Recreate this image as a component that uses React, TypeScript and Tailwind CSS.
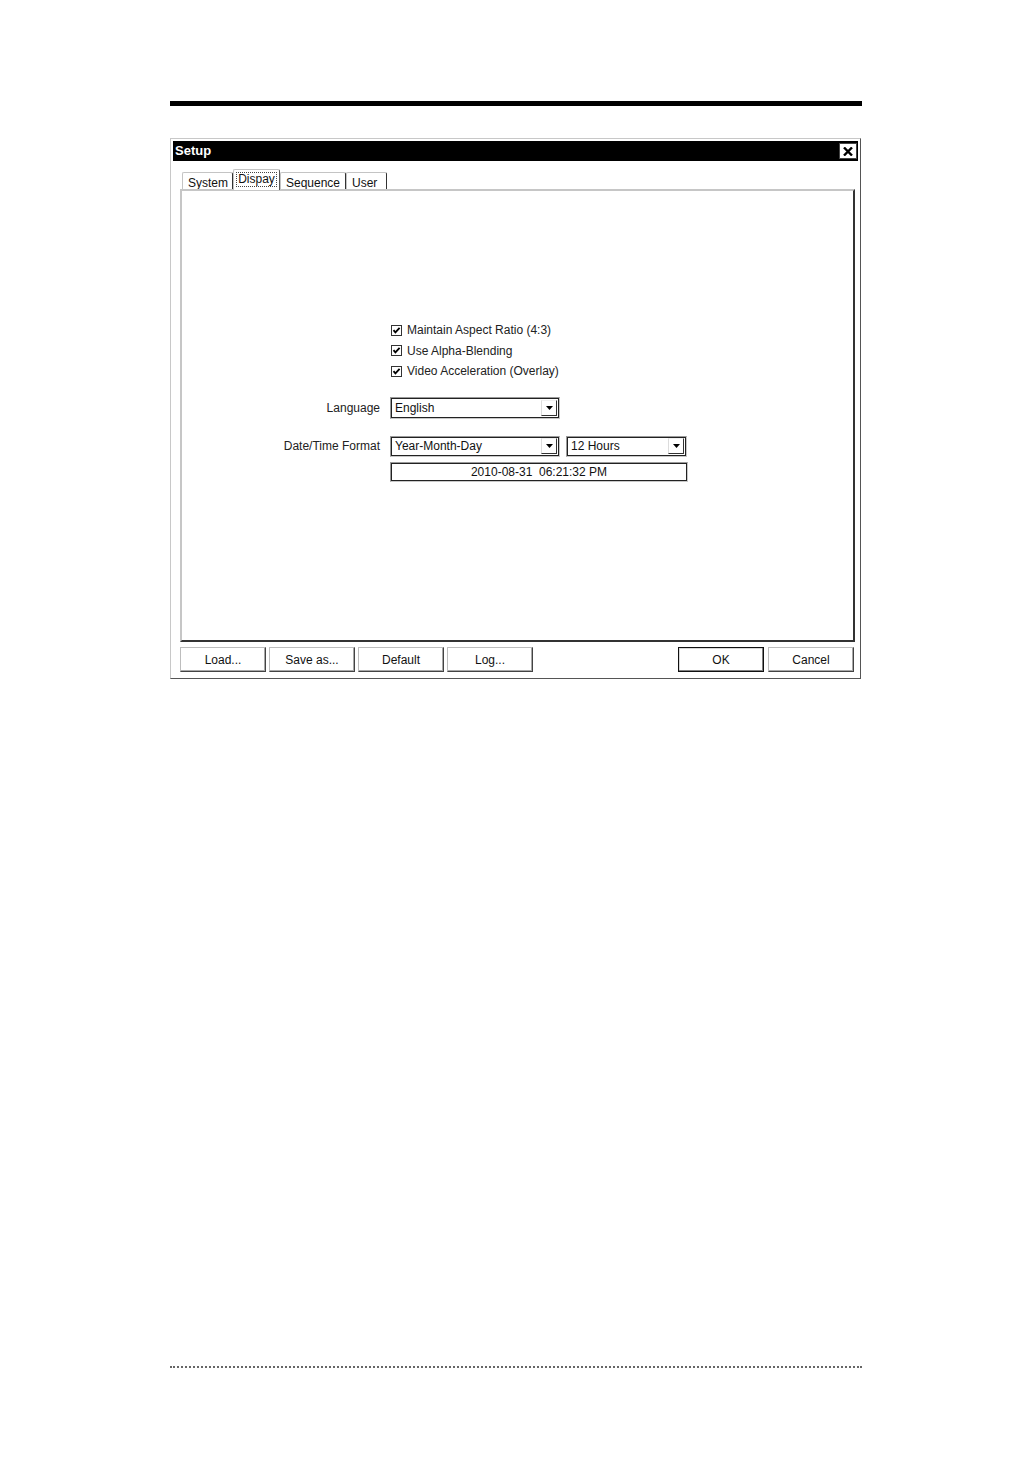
import React from "react";

const font = "font-['Liberation_Sans','Arial',sans-serif]";

function CheckBox({ label }: { label: string }) {
  return (
    <div className="flex h-[20.5px] items-center gap-[5px] pl-[1px]">
      <svg width="11" height="11" viewBox="0 0 11 11" className="shrink-0">
        <rect x="0.5" y="0.5" width="10" height="10" fill="#fff" stroke="#333" />
        <path d="M2.5 5.2 L4.4 7.4 L8.6 2.8" fill="none" stroke="#000" strokeWidth="1.8" />
      </svg>
      <span className="text-[12px] text-[#222]">{label}</span>
    </div>
  );
}

function DropArrow() {
  return (
    <div className="flex h-[16px] w-[16px] items-center justify-center border border-t-[#f0f0f0] border-l-[#dcdcdc] border-r-[#333] border-b-[#333] bg-white">
      <svg width="7" height="4" viewBox="0 0 7 4">
        <path d="M0 0 H7 L3.5 4 Z" fill="#000" />
      </svg>
    </div>
  );
}

function Select({ value, w, h }: { value: string; w: string; h: string }) {
  return (
    <div className={`${w} ${h} border border-t-[#9a9a9a] border-l-[#9a9a9a] border-r-[#c8c8c8] border-b-[#c8c8c8]`}>
      <div className="flex h-full items-center justify-between border border-[#222] bg-white pl-[3px] pr-[1px]">
        <span className="text-[12px] text-[#111]">{value}</span>
        <DropArrow />
      </div>
    </div>
  );
}

function Tab({ label, active, w }: { label: string; active?: boolean; w: string }) {
  if (active) {
    return (
      <div className={`relative z-10 -mb-[1px] flex h-[21px] shrink-0 items-start justify-center rounded-t-[2px] border border-b-0 border-t-[#c4c4c4] border-l-[#c4c4c4] border-r-[#555] bg-white pt-[2px] ${w}`}>
        <span className="border border-dotted border-[#444] px-[1px] text-[12px] leading-[13px] text-[#111]">{label}</span>
      </div>
    );
  }
  return (
    <div className={`flex h-[17px] shrink-0 items-center rounded-t-[2px] border border-b-0 border-t-[#c4c4c4] border-l-[#c4c4c4] border-r-[#333] bg-white pl-[5px] pt-[3px] ${w}`}>
      <span className="text-[12px] text-[#111]">{label}</span>
    </div>
  );
}

function Button({ label, primary }: { label: string; primary?: boolean }) {
  return (
    <div
      className={`flex h-[25px] w-[86px] items-center justify-center border bg-white ${
        primary
          ? "border-[#111] shadow-[inset_-1px_-1px_0_#808080,inset_1px_1px_0_#d8d8d8]"
          : "border-t-[#bdbdbd] border-l-[#bdbdbd] border-r-[#444] border-b-[#444] shadow-[inset_-1px_-1px_0_#a8a8a8]"
      }`}
    >
      <span className="text-[12px] text-[#111]">{label}</span>
    </div>
  );
}

export default function App() {
  return (
    <div className={`min-h-[1458px] w-[1032px] bg-white ${font}`}>
      <div className="mx-auto flex w-[692px] flex-col pt-[101px]">
        <div className="h-[5px] bg-black" />

        <div className="mt-[32px] flex h-[541px] w-[691px] flex-col border border-t-[#c8c8c8] border-l-[#c8c8c8] border-r-[#555] border-b-[#555] p-[2px]">
          <div className="flex h-[20px] items-center justify-between bg-black pl-[2px] pr-[1px]">
            <span className="text-[13px] font-bold text-white">Setup</span>
            <div className="flex h-[16px] w-[18px] items-center justify-center border border-[#444] bg-white">
              <svg width="10" height="9" viewBox="0 0 10 9">
                <path d="M1 0.5 L9 8.5 M9 0.5 L1 8.5" stroke="#000" strokeWidth="2.4" />
              </svg>
            </div>
          </div>

          <div className="flex flex-col pl-[7px] pt-[8px]">
            <div className="flex h-[20px] items-end pl-[2px]">
              <Tab label="System" w="w-[51px]" />
              <Tab label="Dispay" active w="w-[47px]" />
              <Tab label="Sequence" w="w-[66px]" />
              <Tab label="User" w="w-[41px]" />
            </div>

            <div className="h-[453px] w-[675px] border-2 border-t-[#c6c6c6] border-l-[#c6c6c6] border-r-[#333] border-b-[#333] bg-white pt-[129px]">
              <div className="grid grid-cols-[198px_auto] gap-x-[10px]">
                <div />
                <div className="flex flex-col">
                  <CheckBox label="Maintain Aspect Ratio (4:3)" />
                  <CheckBox label="Use Alpha-Blending" />
                  <CheckBox label="Video Acceleration (Overlay)" />
                </div>

                <div className="mt-[15px] flex items-center justify-end text-[12px] text-[#222]">Language</div>
                <div className="mt-[15px]">
                  <Select value="English" w="w-[170px]" h="h-[22px]" />
                </div>

                <div className="mt-[17px] flex items-center justify-end text-[12px] text-[#222]">Date/Time Format</div>
                <div className="mt-[17px] flex gap-[6px]">
                  <Select value="Year-Month-Day" w="w-[170px]" h="h-[21px]" />
                  <Select value="12 Hours" w="w-[121px]" h="h-[21px]" />
                </div>

                <div />
                <div className="mt-[5px] h-[20px] w-[298px] border border-t-[#9a9a9a] border-l-[#9a9a9a] border-r-[#c8c8c8] border-b-[#c8c8c8]">
                  <div className="flex h-full items-center justify-center whitespace-pre border border-[#222] bg-white text-[12px] text-[#111]">
                    {"2010-08-31  06:21:32 PM"}
                  </div>
                </div>
              </div>
            </div>

            <div className="mt-[5px] flex w-[675px] items-center">
              <div className="flex gap-[3px]">
                <Button label="Load..." />
                <Button label="Save as..." />
                <Button label="Default" />
                <Button label="Log..." />
              </div>
              <div className="ml-auto flex gap-[4px] pr-[1px]">
                <Button label="OK" primary />
                <Button label="Cancel" />
              </div>
            </div>
          </div>
        </div>

        <div className="mt-[687px] h-[2px] border-t-2 border-dotted border-[#666]" />
      </div>
    </div>
  );
}
